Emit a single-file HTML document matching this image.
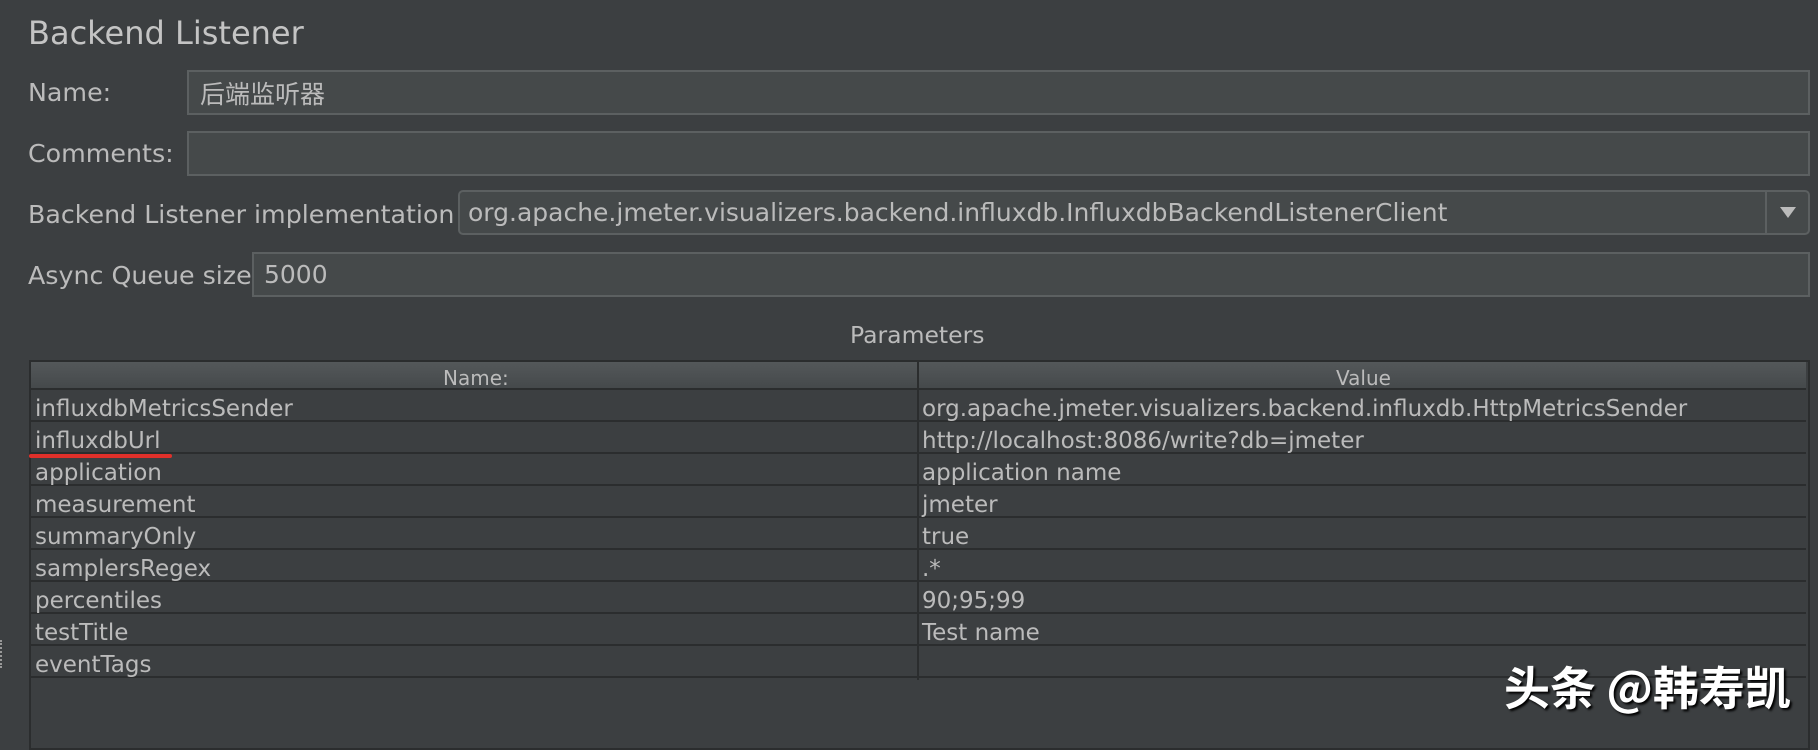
<!DOCTYPE html>
<html><head><meta charset="utf-8"><style>
*{margin:0;padding:0;box-sizing:border-box}
body{width:1818px;height:736px;background:#3c3f41;color:#bbbbbb;font-family:"DejaVu Sans","Noto Sans CJK SC",sans-serif;position:relative;overflow:hidden}
.a{position:absolute;white-space:nowrap}
.lbl{font-size:25.3px;line-height:30px}
.f{position:absolute;background:#45494a;border:2px solid #5c6061}
.ft{position:absolute;font-size:25px;line-height:30px;color:#bbbbbb;white-space:nowrap}
.row{position:absolute;left:31px;width:1775px;height:32px;border-bottom:2px solid #2b2d2e;font-size:23px;line-height:30px}
.row span{position:absolute;top:4px}
</style></head><body>
<div class="a" style="left:28px;top:13px;font-size:32px;line-height:40px;color:#c4c4c4">Backend Listener</div>

<div class="a lbl" style="left:28px;top:78px">Name:</div>
<div class="f" style="left:187px;top:70px;width:1623px;height:45px"></div>
<div class="ft" style="left:200px;top:78px;font-family:'Noto Sans CJK SC',sans-serif">后端监听器</div>

<div class="a lbl" style="left:28px;top:139px">Comments:</div>
<div class="f" style="left:187px;top:131px;width:1623px;height:45px"></div>

<div class="a lbl" style="left:28px;top:200px">Backend Listener implementation</div>
<div class="f" style="left:458px;top:190px;width:1352px;height:45px;border-radius:5px"></div>
<div class="ft" style="left:468px;top:198px">org.apache.jmeter.visualizers.backend.influxdb.InfluxdbBackendListenerClient</div>
<div class="a" style="left:1765px;top:192px;width:2px;height:41px;background:#5c6061"></div>
<div class="a" style="left:1780px;top:207px;width:0;height:0;border-left:8px solid transparent;border-right:8px solid transparent;border-top:11px solid #bbbbbb"></div>

<div class="a lbl" style="left:28px;top:261px">Async Queue size</div>
<div class="f" style="left:252px;top:252px;width:1558px;height:45px"></div>
<div class="ft" style="left:264px;top:260px">5000</div>

<div class="a" style="left:850px;top:320px;font-size:23.5px;line-height:30px">Parameters</div>

<div class="a" style="left:29px;top:360px;width:1781px;height:390px;border:2px solid #2b2d2e;background:#3c3f41"></div>
<div class="a" style="left:31px;top:362px;width:1775px;height:28px;background:linear-gradient(#54585a,#45494b);border-bottom:2px solid #2b2d2e"></div>
<div class="a" style="left:917px;top:362px;width:2px;height:28px;background:#2b2d2e"></div>
<div class="a" style="left:443px;top:364px;font-size:20px;line-height:28px">Name:</div>
<div class="a" style="left:1336px;top:364px;font-size:20px;line-height:28px">Value</div>

<div class="a" style="left:917px;top:390px;width:2px;height:290px;background:#2b2d2e"></div>

<div class="row" style="top:390px"><span style="left:4px">influxdbMetricsSender</span><span style="left:891px">org.apache.jmeter.visualizers.backend.influxdb.HttpMetricsSender</span></div>
<div class="row" style="top:422px"><span style="left:4px">influxdbUrl</span><span style="left:891px">http://localhost:8086/write?db=jmeter</span></div>
<div class="row" style="top:454px"><span style="left:4px">application</span><span style="left:891px">application name</span></div>
<div class="row" style="top:486px"><span style="left:4px">measurement</span><span style="left:891px">jmeter</span></div>
<div class="row" style="top:518px"><span style="left:4px">summaryOnly</span><span style="left:891px">true</span></div>
<div class="row" style="top:550px"><span style="left:4px">samplersRegex</span><span style="left:891px">.*</span></div>
<div class="row" style="top:582px"><span style="left:4px">percentiles</span><span style="left:891px">90;95;99</span></div>
<div class="row" style="top:614px"><span style="left:4px">testTitle</span><span style="left:891px">Test name</span></div>
<div class="row" style="top:646px"><span style="left:4px">eventTags</span><span style="left:891px"></span></div>

<div class="a" style="left:29px;top:454px;width:143px;height:4px;background:#e0302a;border-radius:2px"></div>
<div class="a" style="left:0;top:640px;width:3px;height:28px;border-left:2px dotted #999"></div>

<div class="a" style="left:1504px;top:656px;font-size:46px;line-height:60px;font-weight:bold;color:#fff;font-family:'Noto Sans CJK SC',sans-serif;text-shadow:2px 2px 2px #000">头条 @韩寿凯</div>
</body></html>
